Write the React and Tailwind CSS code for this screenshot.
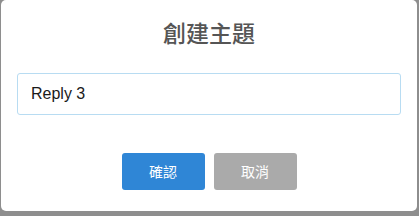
import React from "react";

const App = () => {
  return (
    <div className="w-[419px] h-[216px] bg-[#8e8e8e] overflow-hidden">
      {/* Dialog */}
      <div className="ml-[1px] w-[416px] h-[211px] bg-white rounded-[5px] flex flex-col">
        {/* Title */}
        <h2
          className="mt-[16px] h-[32px] leading-[32px] text-center text-[23px] font-medium text-[#555555]"
          style={{ fontFamily: '"Noto Sans CJK TC", "Noto Sans", sans-serif' }}
        >
          創建主題
        </h2>

        {/* Input */}
        <div className="mt-[25px] px-[16px]">
          <input
            type="text"
            defaultValue="Reply 3"
            className="w-full h-[42px] px-[13px] border border-[#b8dcf2] rounded-[3px] text-[16px] text-[#1a1a1a] outline-none"
            style={{ fontFamily: '"Liberation Sans", Arial, sans-serif' }}
          />
        </div>

        {/* Buttons */}
        <div
          className="mt-[38px] flex justify-center gap-[9px]"
          style={{ fontFamily: '"Noto Sans CJK TC", "Noto Sans", sans-serif' }}
        >
          <button className="w-[83px] h-[37px] rounded-[3px] bg-[#2f86d6] text-white text-[14px]">
            確認
          </button>
          <button className="w-[83px] h-[37px] rounded-[3px] bg-[#aaaaaa] text-white text-[14px]">
            取消
          </button>
        </div>
      </div>
    </div>
  );
};

export default App;
